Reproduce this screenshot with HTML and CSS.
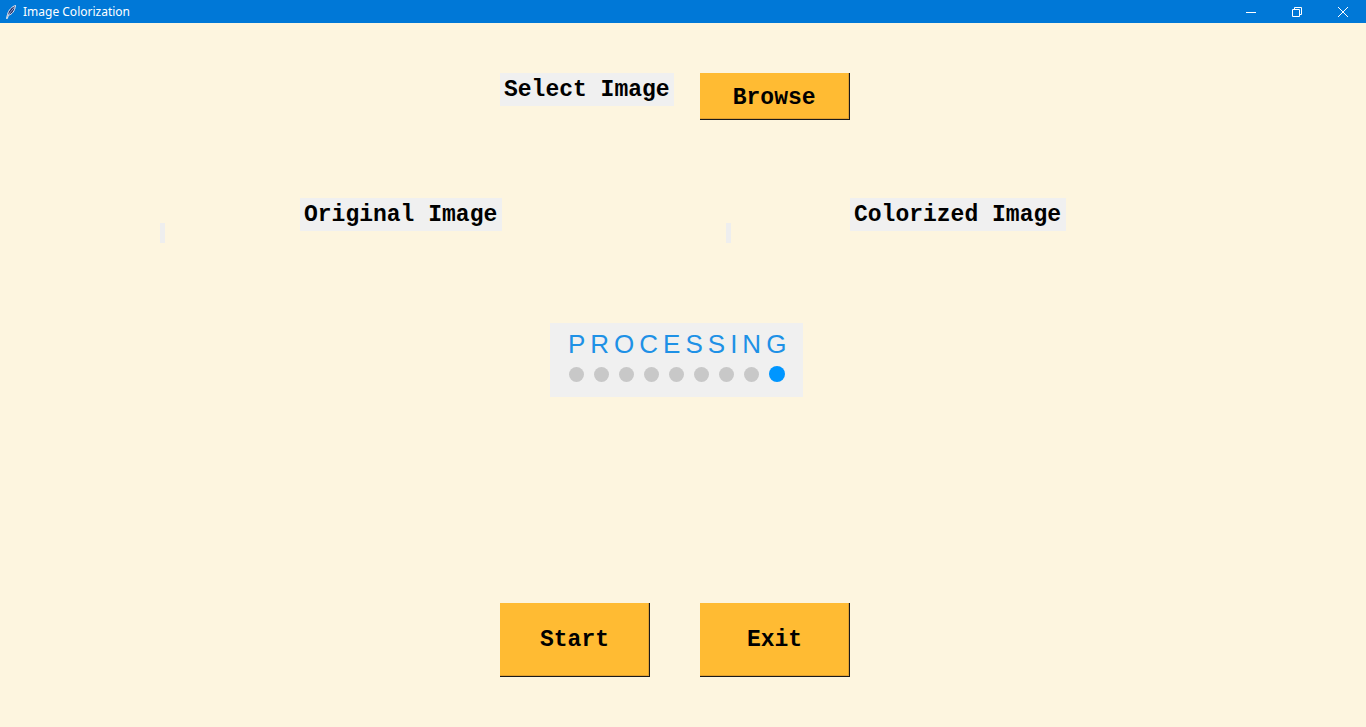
FILE: index.html
```html
<!DOCTYPE html>
<html lang="en">
<head>
<meta charset="utf-8">
<title>Image Colorization</title>
<link rel="stylesheet" href="styles.css">
</head>
<body>
<div class="window">
  <header class="titlebar">
    <div class="title-left">
      <svg class="app-icon" width="16" height="16" viewBox="0 0 16 16">
        <path d="M12.5 1.5 C9 2.5 5.5 6 4.5 10.5 L3.5 14.5 L4.3 14.6 L5.4 11.2 C9 10.5 11.8 7 12.5 1.5 Z" fill="#1b2a6b" stroke="#ffffff" stroke-width="0.9"/>
        <path d="M11.5 3 L5.2 11" stroke="#ffffff" stroke-width="0.6"/>
      </svg>
      <span class="title-text">Image Colorization</span>
    </div>
    <div class="controls">
      <div class="ctrl">
        <svg width="12" height="12" viewBox="0 0 12 12"><path d="M1 6.5 H11" stroke="#fff" stroke-width="1"/></svg>
      </div>
      <div class="ctrl">
        <svg width="12" height="12" viewBox="0 0 12 12"><path d="M1.5 3.5 H8.5 V10.5 H1.5 Z M3.5 3.5 V1.5 H10.5 V8.5 H8.5" fill="none" stroke="#fff" stroke-width="1"/></svg>
      </div>
      <div class="ctrl">
        <svg width="12" height="12" viewBox="0 0 12 12"><path d="M1 1 L11 11 M11 1 L1 11" stroke="#fff" stroke-width="1"/></svg>
      </div>
    </div>
  </header>

  <main class="content">
    <div class="row-select">
      <div class="label">Select Image</div>
      <div class="btn btn-browse">Browse</div>
    </div>

    <div class="row-images">
      <div class="img-slot slot-original"></div>
      <div class="label label-original">Original Image</div>
      <div class="img-slot slot-colorized"></div>
      <div class="label label-colorized">Colorized Image</div>
    </div>

    <div class="processing">
      <div class="proc-text">PROCESSING</div>
      <div class="dots">
        <span class="cell"><span class="dot"></span></span>
        <span class="cell"><span class="dot"></span></span>
        <span class="cell"><span class="dot"></span></span>
        <span class="cell"><span class="dot"></span></span>
        <span class="cell"><span class="dot"></span></span>
        <span class="cell"><span class="dot"></span></span>
        <span class="cell"><span class="dot"></span></span>
        <span class="cell"><span class="dot"></span></span>
        <span class="cell"><span class="dot dot-active"></span></span>
      </div>
    </div>

    <div class="row-actions">
      <div class="btn btn-big">Start</div>
      <div class="btn btn-big">Exit</div>
    </div>
  </main>
</div>
</body>
</html>
```

FILE: styles.css
```css
* { box-sizing: border-box; }

html, body {
  margin: 0;
  padding: 0;
  width: 1366px;
  height: 727px;
  overflow: hidden;
}

.window {
  width: 1366px;
  height: 727px;
  display: flex;
  flex-direction: column;
  background: #fdf5df;
}

.titlebar {
  height: 23px;
  flex: 0 0 23px;
  background: #0078d7;
  display: flex;
  justify-content: space-between;
  align-items: stretch;
}

.title-left {
  display: flex;
  align-items: center;
  padding-left: 3px;
}

.app-icon { display: block; }

.title-text {
  margin-left: 4px;
  color: #ffffff;
  font-family: "Noto Sans", "Open Sans", sans-serif;
  font-size: 12px;
  line-height: 23px;
}

.controls {
  display: flex;
}

.ctrl {
  width: 46px;
  height: 23px;
  display: flex;
  align-items: center;
  justify-content: center;
}

.ctrl svg { display: block; }

.content {
  flex: 1;
  display: flex;
  flex-direction: column;
}

.label {
  background: #f0f0f0;
  font-family: "Liberation Mono", "Courier New", monospace;
  font-weight: bold;
  font-size: 23px;
  line-height: 31px;
  height: 33px;
  padding: 2px 4px 0;
  color: #000000;
  white-space: nowrap;
}

.btn {
  background: #ffbb33;
  font-family: "Liberation Mono", "Courier New", monospace;
  font-weight: bold;
  font-size: 23px;
  color: #000000;
  display: flex;
  align-items: center;
  justify-content: center;
  width: 150px;
  border-right: 1px solid #1a1a1a;
  border-bottom: 1px solid #1a1a1a;
  box-shadow: inset -1px -1px 0 #e0a030;
}

.row-select {
  display: flex;
  align-items: flex-start;
  margin-top: 50px;
  padding-left: 500px;
  gap: 26px;
}

.btn-browse {
  height: 47px;
  padding-top: 3px;
}

.row-images {
  display: flex;
  align-items: flex-start;
  margin-top: 78px;
}

.img-slot {
  width: 5px;
  height: 20px;
  margin-top: 25px;
  background: #eeeeee;
}

.slot-original { margin-left: 160px; }
.label-original { margin-left: 135px; width: 202px; }
.slot-colorized { margin-left: 224px; }
.label-colorized { margin-left: 119px; width: 216px; }

.processing {
  margin-top: 80px;
  margin-left: 550px;
  width: 253px;
  height: 74px;
  background: #f0f0f0;
  display: flex;
  flex-direction: column;
}

.proc-text {
  font-family: "Liberation Sans", Arial, sans-serif;
  font-size: 26px;
  line-height: 30px;
  letter-spacing: 5px;
  color: #1e91e6;
  padding-top: 6px;
  padding-left: 18px;
  white-space: nowrap;
}

.dots {
  display: flex;
  margin-top: 7px;
  padding-left: 14px;
  height: 16px;
}

.cell {
  width: 25px;
  height: 16px;
  display: flex;
  align-items: center;
  justify-content: center;
}

.dot {
  width: 15px;
  height: 15px;
  border-radius: 50%;
  background: #c8c8c8;
}

.dot-active {
  width: 16px;
  height: 16px;
  background: #0096ff;
}

.row-actions {
  display: flex;
  margin-top: 206px;
  padding-left: 500px;
  gap: 50px;
}

.btn-big {
  height: 74px;
}
```
